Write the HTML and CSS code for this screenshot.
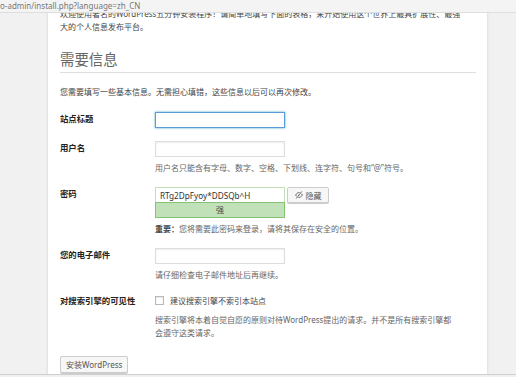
FILE: index.html
```html
<!DOCTYPE html>
<html>
<head>

    <meta charset="UTF-8">
    <title>WordPress › 安装</title>

    <meta name="viewport" content="width=device-width, initial-scale=1">

    <link rel="stylesheet" href="styles.css">

</head>
<body>

    <div class="urlbar">o-admin/install.php?language=zh_CN</div>

    <div class="page">

        <p class="welcome">欢迎使用著名的WordPress五分钟安装程序！请简单地填写下面的表格，来开始使用这个世界上最具扩展性、最强大的个人信息发布平台。</p>

        <h1>需要信息</h1>

        <p class="lead">您需要填写一些基本信息。无需担心填错，这些信息以后可以再次修改。</p>

        <div class="form">

            <div class="row">
                <label class="row-label">站点标题</label>
                <div class="field">
                    <input type="text" class="text is-focus">
                </div>
            </div>

            <div class="row">
                <label class="row-label">用户名</label>
                <div class="field">
                    <input type="text" class="text">
                    <p class="desc">用户名只能含有字母、数字、空格、下划线、连字符、句号和“@”符号。</p>
                </div>
            </div>

            <div class="row">
                <label class="row-label">密码</label>
                <div class="field">
                    <div class="pass-wrap">
                        <div class="pass-box">
                            <input type="text" class="pass-input" value="RTg2DpFyoy*DDSQb^H">
                            <div class="strength">强</div>
                        </div>
                        <button class="btn btn-hide">
                            <svg viewBox="0 0 20 20" width="8" height="8">
                                <path d="M1.5 10c2.2-4 5.2-6 8.5-6s6.3 2 8.5 6c-2.2 4-5.2 6-8.5 6s-6.3-2-8.5-6z" fill="none" stroke="#555" stroke-width="2"/>
                                <circle cx="10" cy="10" r="2.6" fill="#555"/>
                                <path d="M3 19L17 1" stroke="#fff" stroke-width="4.5"/>
                                <path d="M3 19L17 1" stroke="#555" stroke-width="2.2"/>
                            </svg>
                            隐藏
                        </button>
                    </div>
                    <p class="desc"><strong>重要：</strong>您将需要此密码来登录，请将其保存在安全的位置。</p>
                </div>
            </div>

            <div class="row">
                <label class="row-label">您的电子邮件</label>
                <div class="field">
                    <input type="text" class="text">
                    <p class="desc">请仔细检查电子邮件地址后再继续。</p>
                </div>
            </div>

            <div class="row">
                <label class="row-label">对搜索引擎的可见性</label>
                <div class="field">
                    <label class="check"><span class="box"></span>建议搜索引擎不索引本站点</label>
                    <p class="desc desc-wide">搜索引擎将本着自觉自愿的原则对待WordPress提出的请求。并不是所有搜索引擎都会遵守这类请求。</p>
                </div>
            </div>

        </div>

        <button class="btn btn-install">安装WordPress</button>

    </div>

    <div class="statusline"></div>

</body>
</html>
```

FILE: styles.css
```css
html {
    box-sizing: border-box;
}

*,
*:before,
*:after {
    box-sizing: inherit;
}

body {
    margin: 0;
    height: 377px;
    overflow: hidden;
    background: #f1f1f1;
    font-family: "Noto Sans", "Noto Sans CJK SC", sans-serif;
    font-size: 8px;
    line-height: 13px;
    color: #444;
}

p {
    margin: 0;
}

.urlbar {
    position: fixed;
    top: 0;
    left: 0;
    right: 0;
    z-index: 2;
    height: 13px;
    background: #f4f4f4;
    border-bottom: 1px solid #dedede;
    color: #777;
    font-size: 8px;
    line-height: 11px;
    white-space: nowrap;
}

.page {
    width: 439px;
    min-height: 377px;
    margin-left: 48px;
    padding: 7px 11px 0 12px;
    background: #fff;
    box-shadow: 0 1px 3px rgba(0, 0, 0, .13);
}

.welcome {
    width: 403px;
}

h1 {
    margin: 18px 0 0;
    padding-bottom: 3px;
    border-bottom: 1px solid #dedede;
    font-size: 14.4px;
    line-height: 18px;
    font-weight: normal;
    color: #666;
}

.lead {
    margin-top: 12px;
}

.form {
    margin-top: 14px;
}

.row {
    display: grid;
    grid-template-columns: 95px 1fr;
    margin-bottom: 13px;
}

.row-label {
    font-size: 8.4px;
    font-weight: bold;
    color: #222;
}

.text {
    display: block;
    width: 130px;
    height: 16px;
    margin: 0;
    padding: 0 3px;
    border: 1px solid #ddd;
    box-shadow: inset 0 1px 2px rgba(0, 0, 0, .07);
    background: #fff;
    font: inherit;
}

.is-focus {
    border-color: #5b9dd9;
    box-shadow: 0 0 2px rgba(30, 140, 190, .8);
}

.desc {
    margin-top: 4px;
    color: #666;
}

.desc strong {
    color: #444;
}

.desc-wide {
    width: 300px;
    margin-top: 6px;
}

.pass-wrap {
    display: flex;
    align-items: flex-start;
    gap: 2px;
}

.pass-box {
    width: 130px;
}

.pass-input {
    display: block;
    width: 100%;
    height: 15px;
    margin: 0;
    padding: 0 4px;
    border: 1px solid #c1e1b9;
    border-bottom: 0;
    background: #fff;
    font-family: "Noto Sans", sans-serif;
    font-size: 8.2px;
    color: #333;
}

.strength {
    height: 16px;
    border: 1px solid #83c373;
    background: #c1e1b9;
    text-align: center;
    line-height: 14px;
    color: #444;
}

.btn {
    display: flex;
    align-items: center;
    justify-content: center;
    gap: 3px;
    margin: 0;
    padding: 0 5px;
    border: 1px solid #ccc;
    border-radius: 2px;
    background: #f7f7f7;
    box-shadow: 0 1px 0 #ccc;
    color: #555;
    font: inherit;
    white-space: nowrap;
}

.btn-hide {
    width: 42px;
    height: 16px;
}

.check {
    display: flex;
    align-items: center;
    color: #444;
}

.box {
    width: 9px;
    height: 9px;
    margin-right: 6px;
    border: 1px solid #b4b9be;
    background: #fff;
    box-shadow: inset 0 1px 2px rgba(0, 0, 0, .1);
}

.btn-install {
    height: 17px;
    margin-top: 17px;
}

.statusline {
    position: fixed;
    left: 0;
    right: 0;
    bottom: 0;
    height: 3px;
    border-top: 1px solid #cfcfcf;
    background: #f0f0f0;
}
```
